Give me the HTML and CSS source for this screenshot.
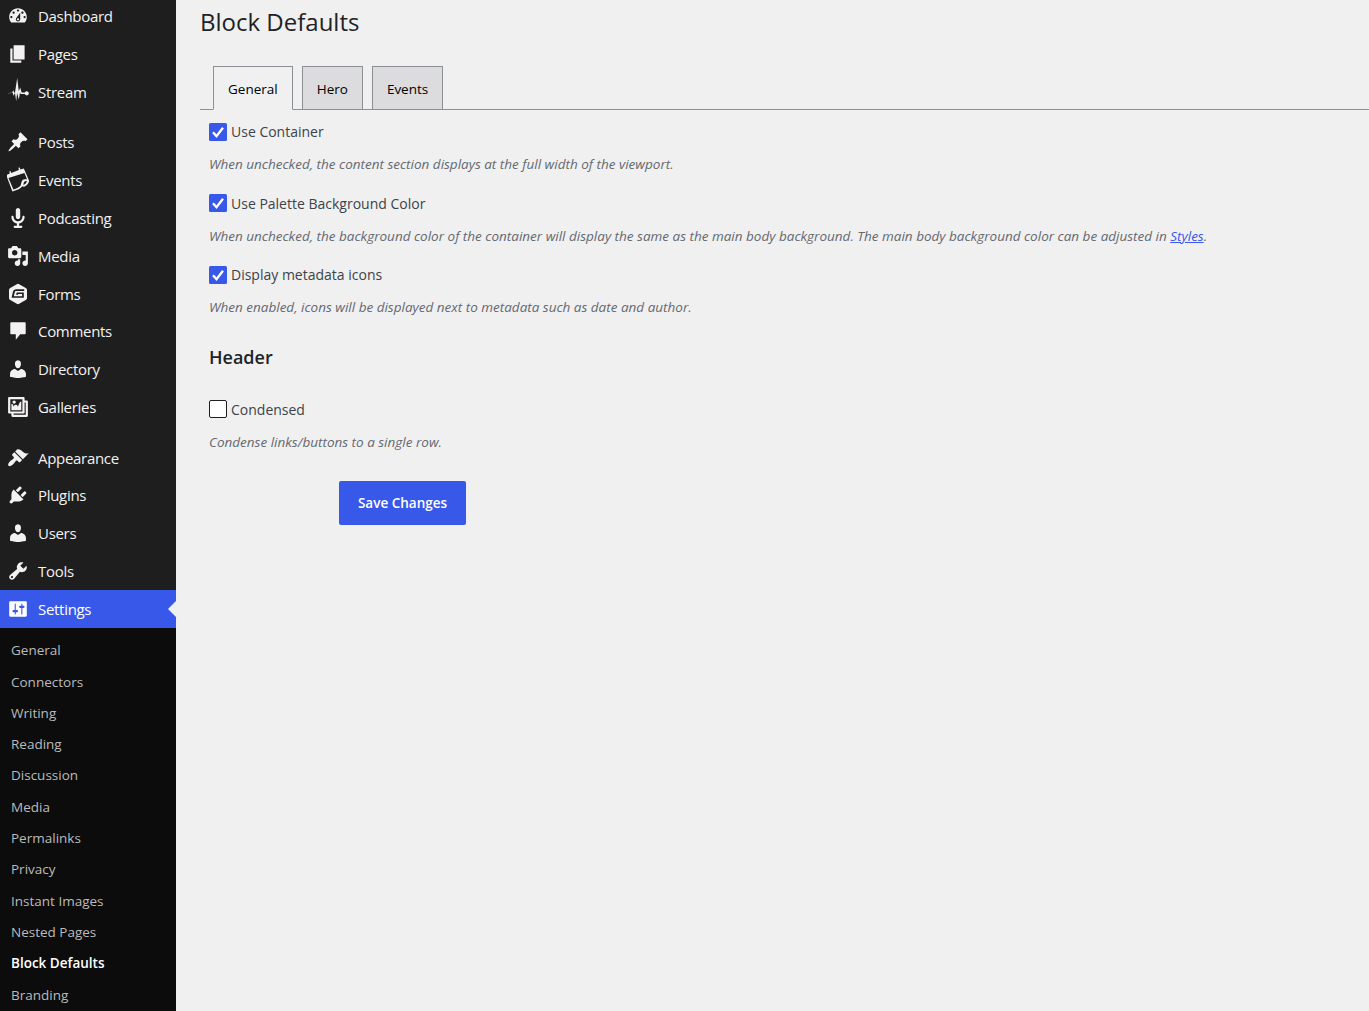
FILE: index.html
```html
<!DOCTYPE html>
<html lang="en">
<head>
<meta charset="utf-8">
<title>Block Defaults</title>
<link rel="stylesheet" href="styles.css">
</head>
<body>
<div class="layout">
  <nav class="sidebar">
    <ul class="menu">
      <li><a class="item"><svg class="icon" viewBox="0 0 20 20"><path d="M3.76 16h12.48c1.1-1.37 1.76-3.11 1.76-5 0-4.42-3.58-8-8-8s-8 3.58-8 8c0 1.89.66 3.63 1.76 5zM10 4c.55 0 1 .45 1 1s-.45 1-1 1-1-.45-1-1 .45-1 1-1zM6 6c.55 0 1 .45 1 1s-.45 1-1 1-1-.45-1-1 .45-1 1-1zm8 0c.55 0 1 .45 1 1s-.45 1-1 1-1-.45-1-1 .45-1 1-1zm-5.37 5.55L12 7v6c0 1.1-.9 2-2 2s-2-.9-2-2c0-.57.24-1.08.63-1.45zM4 10c.55 0 1 .45 1 1s-.45 1-1 1-1-.45-1-1 .45-1 1-1zm12 0c.55 0 1 .45 1 1s-.45 1-1 1-1-.45-1-1 .45-1 1-1zm-5 3c0-.55-.45-1-1-1s-1 .45-1 1 .45 1 1 1 1-.45 1-1z"/></svg><span>Dashboard</span></a></li>
      <li><a class="item"><svg class="icon" viewBox="0 0 20 20"><path d="M6 15V2h10v13H6zm-1 1h8v2H3V5h2v11z"/></svg><span>Pages</span></a></li>
      <li><a class="item"><svg class="icon" viewBox="0 0 22 22"><path d="M0 12.4l5-.9 1.4-2.2 1.3 4.2L10.2-3l1.6 13.2 1.4-3.7 1.4 5h3.2a2.1 2.1 0 1 1 0 1.6h-4.2l-.6-1.6-1.2 7-1.7-6.5-.9 8.3-1.4-9.5-1 4.2-1.6-4.2-.8 1.2z"/></svg><span>Stream</span></a></li>
      <li class="separator"></li>
      <li><a class="item"><svg class="icon" viewBox="0 0 20 20"><path d="M10.44 3.02l1.82-1.82 6.36 6.35-1.83 1.82c-1.05-.68-2.48-.57-3.41.36l-.75.75c-.92.93-1.04 2.35-.35 3.41l-1.83 1.82-2.41-2.41-2.8 2.79c-.42.42-3.38 2.71-3.8 2.29s1.86-3.39 2.28-3.81l2.79-2.79L4.1 9.36l1.83-1.82c1.05.69 2.48.57 3.4-.36l.75-.75c.93-.92 1.05-2.35.36-3.41z"/></svg><span>Posts</span></a></li>
      <li><a class="item"><svg class="icon" viewBox="0 0 22 22"><path d="M0 5.8L2.8 4.6 2.3 2.4l1.2-.4.7 2.1L11.9 1 11.4-1.2l1.3-.4.7 2.2 3.3-1.1 1 2.1 4.3 9.8c.1 2.6-2.3 5.5-5.2 6.3l-1.4-.4c-1.7 2.2-4.7 3.7-10 5.3L0 8.2zm1.5 3.3l4.9 11.4c3.5-1 5.9-2.3 7.1-3.8.9-2 .9-5.8 3.1-6.3 1.6-.3 2.2-.2 3.4-.1L17.4 4.1zM19.9 12.1c-2.6-.6-3.5 1.8-3.5 4 2-.7 3.2-2.1 3.5-4z"/></svg><span>Events</span></a></li>
      <li><a class="item"><svg class="icon" viewBox="0 0 20 20"><path d="M12 9V3c0-1.1-.89-2-2-2-1.12 0-2 .94-2 2v6c0 1.1.9 2 2 2 1.13 0 2-.94 2-2zm4 0c0 2.97-2.16 5.43-5 5.91V17h2c.56 0 1 .45 1 1s-.44 1-1 1H7c-.55 0-1-.45-1-1s.45-1 1-1h2v-2.09C6.17 14.43 4 11.97 4 9c0-.55.45-1 1-1 .56 0 1 .45 1 1 0 2.21 1.8 4 4 4 2.21 0 4-1.79 4-4 0-.55.45-1 1-1 .56 0 1 .45 1 1z"/></svg><span>Podcasting</span></a></li>
      <li><a class="item"><svg class="icon" viewBox="0 0 20 20"><path d="M13 11V4c0-.55-.45-1-1-1h-1.67L9 1H5L3.67 3H2c-.55 0-1 .45-1 1v7c0 .55.45 1 1 1h10c.55 0 1-.45 1-1zM7 4.5c1.38 0 2.5 1.12 2.5 2.5S8.38 9.5 7 9.5 4.5 8.38 4.5 7 5.62 4.5 7 4.5zM14 6h5v10.5c0 1.38-1.12 2.5-2.5 2.5S14 17.88 14 16.5s1.12-2.5 2.5-2.5c.17 0 .34.02.5.05V9h-3V6zm-4 8.05V13h2v3.5c0 1.38-1.12 2.5-2.5 2.5S7 17.88 7 16.5 8.12 14 9.5 14c.17 0 .34.02.5.05z"/></svg><span>Media</span></a></li>
      <li><a class="item"><svg class="icon" viewBox="0 0 22 22"><path fill-rule="evenodd" d="M11 .8l1.2.4 7 4.1.8 1.2v9l-.8 1.2-7 4.1-1.2.4-1.2-.4-7-4.1-.8-1.2v-9l.8-1.2 7-4.1zM17.2 6.3H9.4c-2 0-3 1-3.5 2.8L4.6 14.8h12.2V9.6H9.7l-.6 2.2h1.8l.3-.7h3.9v2.1H6.8L7.700 9.4c.2-.9.7-1.400 1.700-1.400h7.800z"/></svg><span>Forms</span></a></li>
      <li><a class="item"><svg class="icon" viewBox="0 0 20 20"><path d="M5 2h11c.55 0 1 .45 1 1v9c0 .55-.45 1-1 1h-4l-4 5v-5H4c-.55 0-1-.45-1-1V3c0-.55.45-1 1-1z"/></svg><span>Comments</span></a></li>
      <li><a class="item"><svg class="icon" viewBox="0 0 20 20"><path d="M10 9.25c-2.27 0-2.73-3.44-2.73-3.44C7 4.02 7.82 2 9.97 2c2.16 0 2.98 2.02 2.71 3.81 0 0-.41 3.44-2.68 3.44zm0 2.57L12.72 10c2.39 0 4.52 2.33 4.52 4.53v2.49s-3.65 1.13-7.24 1.13c-3.65 0-7.24-1.13-7.24-1.13v-2.49c0-2.25 1.94-4.48 4.47-4.48z"/></svg><span>Directory</span></a></li>
      <li><a class="item"><svg class="icon" viewBox="0 0 20 20"><path d="M16 4h1.96c.57 0 1.04.47 1.04 1.04v12.92c0 .57-.47 1.04-1.04 1.04H5.04C4.47 19 4 18.53 4 17.96V16H2.04C1.47 16 1 15.53 1 14.96V2.04C1 1.47 1.47 1 2.04 1h12.92c.57 0 1.04.47 1.04 1.04V4zM3 14h11V3H3v11zm5-8.5C8 4.67 7.33 4 6.5 4S5 4.67 5 5.5 5.67 7 6.5 7 8 6.33 8 5.5zm2 4.5s1-5 3-5v8H4V7c2 0 2 3 2 3s.33-2 2-2 2 2 2 2zm7 7V6h-1v8.960c0 .57-.47 1.04-1.04 1.04H6v1h11z"/></svg><span>Galleries</span></a></li>
      <li class="separator"></li>
      <li><a class="item"><svg class="icon" viewBox="0 0 20 20"><path d="M14.48 11.06L7.41 3.99l1.5-1.5c.5-.56 2.3-.47 3.51.32 1.21.8 1.43 1.28 2.91 2.1 1.18.64 2.45 1.26 4.45.85zm-.71.71L6.7 4.7 4.93 6.47c-.39.39-.39 1.02 0 1.41l1.06 1.06c.39.39.39 1.03 0 1.42-.6.6-1.43 1.11-2.21 1.69-.35.26-.7.53-1.01.84C1.43 14.23.4 16.08 1.4 17.07c.99 1 2.84-.03 4.18-1.36.31-.31.58-.66.85-1.02.57-.78 1.08-1.61 1.69-2.21.39-.39 1.02-.39 1.41 0l1.06 1.06c.39.39 1.02.39 1.41 0z"/></svg><span>Appearance</span></a></li>
      <li><a class="item"><svg class="icon" viewBox="0 0 20 20"><path d="M13.11 4.36L9.87 7.6 8 5.73l3.24-3.24c.35-.34 1.05-.2 1.56.32.52.51.66 1.21.31 1.55zm-8 1.77l.91-1.12 9.01 9.01-1.19.84c-.71.71-2.63 1.16-3.82 1.16H6.14L4.9 17.26c-.59.59-1.54.59-2.12 0-.59-.58-.59-1.53 0-2.12l1.24-1.24v-3.88c0-1.13.4-3.19 1.09-3.89zm7.26 3.97l3.24-3.24c.34-.35 1.04-.21 1.55.31.52.51.66 1.21.31 1.55l-3.24 3.25z"/></svg><span>Plugins</span></a></li>
      <li><a class="item"><svg class="icon" viewBox="0 0 20 20"><path d="M10 9.25c-2.27 0-2.73-3.44-2.73-3.44C7 4.02 7.82 2 9.97 2c2.16 0 2.98 2.02 2.71 3.81 0 0-.41 3.44-2.68 3.44zm0 2.57L12.72 10c2.39 0 4.52 2.33 4.52 4.53v2.49s-3.65 1.13-7.24 1.13c-3.65 0-7.24-1.13-7.24-1.13v-2.49c0-2.25 1.94-4.48 4.47-4.48z"/></svg><span>Users</span></a></li>
      <li><a class="item"><svg class="icon" viewBox="0 0 20 20"><path d="M16.68 9.77c-1.34 1.34-3.3 1.67-4.95.99l-5.41 6.52c-.99.99-2.59.99-3.58 0s-.99-2.59 0-3.57l6.52-5.42c-.68-1.65-.35-3.61.99-4.95 1.28-1.28 3.12-1.62 4.72-1.06l-2.89 2.89 2.82 2.82 2.86-2.87c.53 1.58.18 3.39-1.08 4.65zM3.81 16.21c.4.39 1.04.39 1.43 0 .4-.4.4-1.04 0-1.43-.39-.4-1.03-.4-1.43 0-.39.39-.39 1.03 0 1.43z"/></svg><span>Tools</span></a></li>
      <li><a class="item current"><svg class="icon" viewBox="0 0 20 20"><path d="M18 16V4c0-.55-.45-1-1-1H3c-.55 0-1 .45-1 1v12c0 .55.45 1 1 1h14c.55 0 1-.45 1-1zM8 11h1c.55 0 1 .45 1 1s-.45 1-1 1H8v1.500c0 .28-.22.5-.5.5s-.5-.22-.5-.5V13H6c-.55 0-1-.45-1-1s.45-1 1-1h1V5.500c0-.28.22-.5.5-.5s.5.22.5.5V11zm5-2h-1c-.55 0-1-.45-1-1s.45-1 1-1h1V5.500c0-.28.22-.5.5-.5s.5.22.5.5V7h1c.55 0 1 .45 1 1s-.45 1-1 1h-1v5.500c0 .28-.22.5-.5.5s-.5-.22-.5-.5V9z"/></svg><span>Settings</span></a></li>
    </ul>
    <ul class="submenu">
      <li>General</li>
      <li>Connectors</li>
      <li>Writing</li>
      <li>Reading</li>
      <li>Discussion</li>
      <li>Media</li>
      <li>Permalinks</li>
      <li>Privacy</li>
      <li>Instant Images</li>
      <li>Nested Pages</li>
      <li class="active">Block Defaults</li>
      <li>Branding</li>
    </ul>
  </nav>
  <main class="content">
    <h1>Block Defaults</h1>
    <div class="tabs">
      <a class="tab selected">General</a>
      <a class="tab">Hero</a>
      <a class="tab">Events</a>
    </div>
    <form class="fields">
      <div class="field">
        <label><svg class="box" viewBox="0 0 18 18"><rect width="18" height="18" rx="1.500"/><path d="M4 9.300l3.500 3.900L14 4.800"/></svg><span>Use Container</span></label>
        <p>When unchecked, the content section displays at the full width of the viewport.</p>
      </div>
      <div class="field">
        <label><svg class="box" viewBox="0 0 18 18"><rect width="18" height="18" rx="1.500"/><path d="M4 9.300l3.500 3.900L14 4.800"/></svg><span>Use Palette Background Color</span></label>
        <p>When unchecked, the background color of the container will display the same as the main body background. The main body background color can be adjusted in <a>Styles</a>.</p>
      </div>
      <div class="field">
        <label><svg class="box" viewBox="0 0 18 18"><rect width="18" height="18" rx="1.500"/><path d="M4 9.300l3.500 3.900L14 4.800"/></svg><span>Display metadata icons</span></label>
        <p>When enabled, icons will be displayed next to metadata such as date and author.</p>
      </div>
      <h2>Header</h2>
      <div class="field">
        <label><span class="box empty"></span><span>Condensed</span></label>
        <p>Condense links/buttons to a single row.</p>
      </div>
      <button type="button" class="save">Save Changes</button>
    </form>
  </main>
</div>
</body>
</html>
```
FILE: styles.css
```css
* { box-sizing: border-box; }
body {
  margin: 0;
  height: 1011px;
  overflow: hidden;
  background: #f0f0f0;
  font-family: "Open Sans", "Noto Sans", sans-serif;
  font-size: 14px;
  color: #3c434a;
}
ul { list-style: none; margin: 0; padding: 0; }
.layout { display: flex; height: 1011px; }
.sidebar {
  flex: 0 0 176px;
  display: flex;
  flex-direction: column;
  overflow: hidden;
  background: #1e1e1e;
}
.menu { margin-top: -2.600px; }
.item {
  display: flex;
  align-items: center;
  gap: 9px;
  height: 37.800px;
  padding-left: 7px;
  color: #f3f1f1;
  font-size: 15px;
  letter-spacing: -0.3px;
}
.icon { width: 22px; height: 22px; fill: currentColor; overflow: visible; }
.separator { height: 12.800px; }
.current { background: #3858e9; color: #fff; justify-content: flex-start; }
.current::after {
  content: "";
  margin-left: auto;
  border: 8.500px solid transparent;
  border-left: 0;
  border-right-color: #f0f0f0;
}
.submenu {
  flex: 1;
  padding-top: 7.500px;
  background: #0c0c0c;
  color: #bbb;
  font-size: 13.500px;
}
.submenu li { height: 31.300px; line-height: 31.300px; padding-left: 11px; }
.submenu .active { color: #fff; font-weight: 600; }
.content { flex: 1; min-width: 0; padding-left: 24px; }
h1 {
  margin: 0;
  height: 66px;
  padding-top: 4px;
  font-size: 24px;
  line-height: 36px;
  font-weight: 400;
  color: #1d2327;
}
.tabs {
  display: flex;
  gap: 9px;
  height: 44px;
  padding-left: 13px;
  border-bottom: 1px solid #8c8f94;
}
.tab {
  height: 44px;
  padding: 0 14px;
  border: 1px solid #8c8f94;
  background: #dcdcde;
  color: #000;
  font-size: 13.500px;
  line-height: 45px;
}
.tab.selected { background: #f0f0f0; border-bottom-color: #f0f0f0; }
.fields { padding: 12px 0 0 9px; }
.field { height: 71.500px; }
.field label { display: flex; align-items: center; gap: 4px; height: 19px; line-height: 19px; }
.box { width: 18px; height: 18px; flex: none; }
.box rect { fill: #3858e9; }
.box path { fill: none; stroke: #fff; stroke-width: 2.400; }
.box.empty { border: 1px solid #1e1e1e; border-radius: 2px; background: #fff; }
.field p {
  margin: 13px 0 0;
  line-height: 20px;
  font-size: 13.500px;
  font-style: italic;
  color: #646970;
  white-space: nowrap;
}
.field a { color: #3858e9; text-decoration: underline; }
h2 {
  margin: 8px 0 31px;
  font-size: 18px;
  line-height: 24px;
  font-weight: 600;
  color: #1d2327;
}
.save {
  display: block;
  width: 127px;
  height: 44px;
  margin: 10px 0 0 130px;
  padding: 0;
  border: 0;
  border-radius: 2px;
  background: #3858e9;
  color: #fff;
  font: 600 13.500px "Open Sans", sans-serif;
}
```
